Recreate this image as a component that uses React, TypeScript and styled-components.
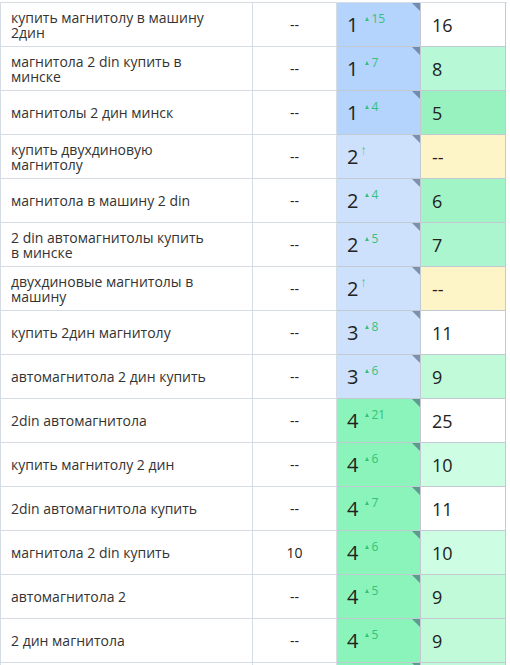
import React from "react";
import styled, { createGlobalStyle } from "styled-components";

const GlobalStyle = createGlobalStyle`
  html, body {
    margin: 0;
    padding: 0;
    background: #ffffff;
    overflow: hidden;
  }
  body {
    font-family: "Open Sans", "Liberation Sans", sans-serif;
    color: #333;
  }
`;

const Table = styled.div`
  margin-top: 2px;
  width: 507px;
  display: flex;
  flex-direction: column;
  border-top: 1px solid #d6dce4;
  border-left: 1px solid #d6dce4;
  box-sizing: border-box;
`;

const Row = styled.div`
  display: grid;
  grid-template-columns: 252px 84px 84px 85px;
  height: 44px;
`;

const Cell = styled.div`
  box-sizing: border-box;
  border-right: 1px solid #d6dce4;
  border-bottom: 1px solid #d6dce4;
  display: flex;
  align-items: center;
`;

const KeyCell = styled(Cell)`
  padding: 0 40px 0 10px;
  font-size: 14px;
  line-height: 15px;
  color: #333;
`;

const PosCell = styled(Cell)`
  justify-content: center;
  font-size: 14px;
  color: #222;
`;

const RankCell = styled(Cell)<{ $bg: string }>`
  position: relative;
  padding-left: 10px;
  border-color: #c3c9d2;
  background: ${(p) => p.$bg};
  white-space: nowrap;

  &::after {
    content: "";
    position: absolute;
    top: 0;
    right: 0;
    border-style: solid;
    border-width: 0 8px 8px 0;
    border-color: transparent rgba(60, 80, 110, 0.55) transparent transparent;
  }
`;

const RankNum = styled.span`
  font-size: 20px;
  line-height: 20px;
  color: #222;
`;

const Delta = styled.span`
  align-self: flex-start;
  margin: 10px 0 0 7px;
  font-size: 12px;
  line-height: 12px;
  color: #34c27a;
  display: flex;
  align-items: center;
  gap: 2px;
`;

const Tri = styled.span`
  width: 0;
  height: 0;
  border-left: 2.5px solid transparent;
  border-right: 2.5px solid transparent;
  border-bottom: 4px solid #34c27a;
`;

const Up = styled.span`
  align-self: flex-start;
  margin: 8px 0 0 2px;
  font-size: 14px;
  line-height: 14px;
  color: #34c27a;
  transform: scaleX(0.7);
`;

const ValueCell = styled(Cell)<{ $bg: string }>`
  padding-left: 11px;
  border-color: #c3c9d2;
  background: ${(p) => p.$bg};
  font-size: 18px;
  color: #222;
`;

type Item = {
  keyword: string;
  pos: string;
  rank: number;
  delta: number | null;
  value: string;
  valueBg: string;
};

const rankBg: Record<number, string> = {
  1: "#b4d3fd",
  2: "#cde1fd",
  3: "#cde1fd",
  4: "#8af4ba",
};

const items: Item[] = [
  { keyword: "купить магнитолу в машину 2дин", pos: "--", rank: 1, delta: 15, value: "16", valueBg: "#ffffff" },
  { keyword: "магнитола 2 din купить в минске", pos: "--", rank: 1, delta: 7, value: "8", valueBg: "#b7f9d7" },
  { keyword: "магнитолы 2 дин минск", pos: "--", rank: 1, delta: 4, value: "5", valueBg: "#98f2c0" },
  { keyword: "купить двухдиновую магнитолу", pos: "--", rank: 2, delta: null, value: "--", valueBg: "#fdf5c8" },
  { keyword: "магнитола в машину 2 din", pos: "--", rank: 2, delta: 4, value: "6", valueBg: "#a0f4c6" },
  { keyword: "2 din автомагнитолы купить в минске", pos: "--", rank: 2, delta: 5, value: "7", valueBg: "#acf6cf" },
  { keyword: "двухдиновые магнитолы в машину", pos: "--", rank: 2, delta: null, value: "--", valueBg: "#fdf5c8" },
  { keyword: "купить 2дин магнитолу", pos: "--", rank: 3, delta: 8, value: "11", valueBg: "#ffffff" },
  { keyword: "автомагнитола 2 дин купить", pos: "--", rank: 3, delta: 6, value: "9", valueBg: "#c0fad9" },
  { keyword: "2din автомагнитола", pos: "--", rank: 4, delta: 21, value: "25", valueBg: "#ffffff" },
  { keyword: "купить магнитолу 2 дин", pos: "--", rank: 4, delta: 6, value: "10", valueBg: "#cdfde3" },
  { keyword: "2din автомагнитола купить", pos: "--", rank: 4, delta: 7, value: "11", valueBg: "#ffffff" },
  { keyword: "магнитола 2 din купить", pos: "10", rank: 4, delta: 6, value: "10", valueBg: "#cdfde3" },
  { keyword: "автомагнитола 2", pos: "--", rank: 4, delta: 5, value: "9", valueBg: "#c0fad9" },
  { keyword: "2 дин магнитола", pos: "--", rank: 4, delta: 5, value: "9", valueBg: "#c0fad9" },
  { keyword: "магнитола 2 дин", pos: "--", rank: 4, delta: 5, value: "9", valueBg: "#c0fad9" },
];

const App = () => {
  return (
    <>
      <GlobalStyle />
      <Table>
        {items.map((item, i) => (
          <Row key={i}>
            <KeyCell>{item.keyword}</KeyCell>
            <PosCell>{item.pos}</PosCell>
            <RankCell $bg={rankBg[item.rank]}>
              <RankNum>{item.rank}</RankNum>
              {item.delta === null ? (
                <Up>↑</Up>
              ) : (
                <Delta>
                  <Tri />
                  {item.delta}
                </Delta>
              )}
            </RankCell>
            <ValueCell $bg={item.valueBg}>{item.value}</ValueCell>
          </Row>
        ))}
      </Table>
    </>
  );
};

export default App;
